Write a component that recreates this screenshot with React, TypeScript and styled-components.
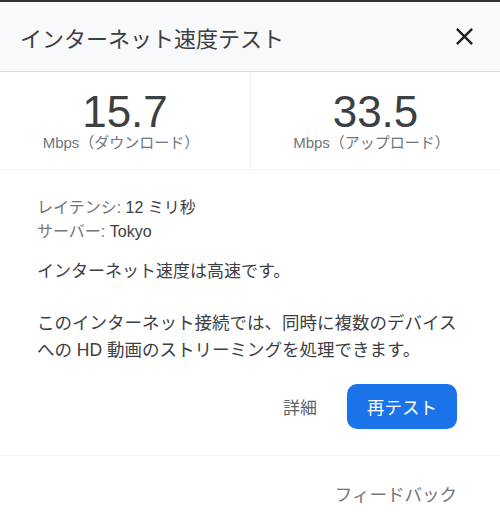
import React from 'react';
import styled, { createGlobalStyle } from 'styled-components';

const GlobalStyle = createGlobalStyle`
  html, body {
    margin: 0;
    padding: 0;
    background: #ffffff;
  }
  body {
    font-family: "Liberation Sans", Arial, "Noto Sans CJK JP", sans-serif;
  }
`;

const SpeedTestPage: React.FC = () => {
  return (
    <>
      <GlobalStyle />
      <Panel>
        <TopEdge />
        <Header>
          <Title>インターネット速度テスト</Title>
          <CloseButton aria-label="閉じる">
            <svg width="29" height="29" viewBox="0 0 24 24">
              <path
                fill="#202124"
                d="M19 6.41L17.59 5 12 10.59 6.41 5 5 6.41 10.59 12 5 17.59 6.41 19 12 13.41 17.59 19 19 17.59 13.41 12z"
              />
            </svg>
          </CloseButton>
        </Header>

        <Stats>
          <Stat>
            <Value>15.7</Value>
            <Unit>Mbps（ダウンロード）</Unit>
          </Stat>
          <Stat>
            <Value>33.5</Value>
            <Unit>Mbps（アップロード）</Unit>
          </Stat>
        </Stats>

        <Content>
          <Details>
            <DetailRow>
              <Label>レイテンシ:</Label> 12 ミリ秒
            </DetailRow>
            <DetailRow>
              <Label>サーバー:</Label> Tokyo
            </DetailRow>
          </Details>
          <Summary>インターネット速度は高速です。</Summary>
          <Description>
            このインターネット接続では、同時に複数のデバイスへの HD 動画のストリーミングを処理できます。
          </Description>
        </Content>

        <Actions>
          <TextButton>詳細</TextButton>
          <PrimaryButton>再テスト</PrimaryButton>
        </Actions>

        <Footer>
          <FeedbackLink>フィードバック</FeedbackLink>
        </Footer>
      </Panel>
    </>
  );
};

const Panel = styled.div`
  width: 500px;
  min-height: 529px;
  background: #ffffff;
  display: flex;
  flex-direction: column;
`;

const TopEdge = styled.div`
  height: 2px;
  background: #2f3033;
`;

const Header = styled.div`
  height: 70px;
  box-sizing: border-box;
  background: #f8f9fa;
  border-bottom: 1px solid #dadce0;
  display: flex;
  align-items: center;
  justify-content: space-between;
  padding: 0 21px 0 20px;
`;

const Title = styled.h1`
  margin: 0;
  font-size: 22px;
  font-weight: 400;
  line-height: 28px;
  color: #3c4043;
  font-family: "Noto Sans CJK JP", sans-serif;
`;

const CloseButton = styled.button`
  border: none;
  background: transparent;
  padding: 0;
  width: 29px;
  height: 29px;
  display: flex;
  align-items: center;
  justify-content: center;
  cursor: pointer;
`;

const Stats = styled.div`
  display: grid;
  grid-template-columns: 1fr 1fr;
  height: 97px;
  border-bottom: 1px solid #f1f3f4;
`;

const Stat = styled.div`
  display: flex;
  flex-direction: column;
  align-items: center;
  padding-top: 18px;

  & + & {
    border-left: 1px solid #f1f3f4;
  }
`;

const Value = styled.div`
  font-family: "Liberation Sans", Arial, sans-serif;
  font-size: 44px;
  line-height: 44px;
  color: #3c4043;
`;

const Unit = styled.div`
  font-size: 15px;
  line-height: 18px;
  color: #70757a;
  margin-left: -8px;
`;

const Content = styled.div`
  padding: 26px 37px 0;
  display: flex;
  flex-direction: column;
  color: #3c4043;
`;

const Details = styled.div`
  font-size: 16px;
  line-height: 24px;
`;

const DetailRow = styled.div`
  color: #3c4043;
`;

const Label = styled.span`
  color: #70757a;
`;

const Summary = styled.p`
  margin: 16px 0 0;
  font-size: 17px;
  line-height: 24px;
`;

const Description = styled.p`
  margin: 26px 0 0;
  font-size: 17.5px;
  line-height: 27px;
  line-break: strict;
`;

const Actions = styled.div`
  display: flex;
  justify-content: flex-end;
  align-items: center;
  gap: 22px;
  padding: 20px 43px 26px;
  border-bottom: 1px solid #f1f3f4;
`;

const TextButton = styled.button`
  border: none;
  background: transparent;
  font-family: "Noto Sans CJK JP", sans-serif;
  font-size: 17px;
  color: #5f6368;
  padding: 0 8px;
  height: 45px;
  cursor: pointer;
`;

const PrimaryButton = styled.button`
  border: none;
  background: #1a73e8;
  color: #ffffff;
  font-family: "Noto Sans CJK JP", sans-serif;
  font-size: 17.5px;
  width: 110px;
  height: 45px;
  border-radius: 10px;
  cursor: pointer;
`;

const Footer = styled.div`
  display: flex;
  justify-content: flex-end;
  padding: 26px 43px 0;
`;

const FeedbackLink = styled.a`
  font-size: 17.5px;
  line-height: 26px;
  color: #70757a;
  cursor: pointer;
`;

export default SpeedTestPage;
